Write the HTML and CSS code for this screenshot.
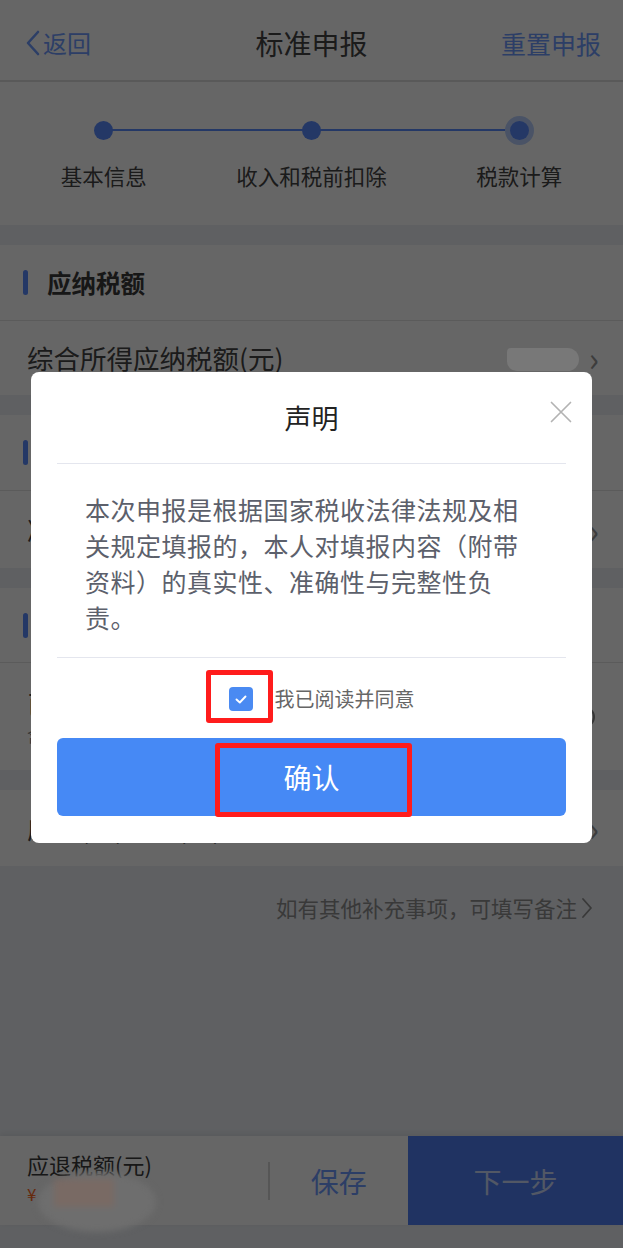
FILE: index.html
```html
<!DOCTYPE html>
<html lang="zh-CN">
<head>
<meta charset="utf-8">
<title>标准申报</title>
<link rel="stylesheet" href="styles.css">
</head>
<body>
<div class="page">
  <header class="nav">
    <a class="nav-back">
      <svg class="back-icon" viewBox="0 0 16 26" width="16" height="26"><path d="M13 2 L3 13 L13 24" fill="none" stroke="#6f9cff" stroke-width="2.6" stroke-linecap="round" stroke-linejoin="round"/></svg>
      <span>返回</span>
    </a>
    <h1 class="nav-title">标准申报</h1>
    <a class="nav-action">重置申报</a>
  </header>

  <section class="steps">
    <div class="steps-line"></div>
    <div class="step"><span class="dot"></span><span class="step-label">基本信息</span></div>
    <div class="step"><span class="dot"></span><span class="step-label">收入和税前扣除</span></div>
    <div class="step"><span class="dot dot-current"></span><span class="step-label">税款计算</span></div>
  </section>

  <div class="gap"></div>
  <section class="card">
    <div class="sec-head"><span class="bar"></span>应纳税额</div>
    <div class="row row-74"><span>综合所得应纳税额(元)</span><span class="chev">›</span></div>
  </section>

  <div class="gap"></div>
  <section class="card">
    <div class="sec-head"><span class="bar"></span>减免税额</div>
    <div class="row row-77"><span>减免税额(元)</span><span class="chev">›</span></div>
  </section>

  <div class="gap"></div>
  <section class="card">
    <div class="sec-head sec-head-75"><span class="bar"></span>已缴税额</div>
    <div class="row row-two">
      <div class="two-lines"><span class="big">已缴税额(元)</span><span class="small">含预扣预缴税额</span></div>
      <span class="info-ring"></span>
    </div>
  </section>

  <div class="gap"></div>
  <section class="card">
    <div class="row row-76"><span>应补(退)税额(元)</span><span class="chev">›</span></div>
  </section>

  <div class="remark">如有其他补充事项，可填写备注<svg class="remark-chev" viewBox="0 0 12 22" width="12" height="22"><path d="M2 2 L10 11 L2 20" fill="none" stroke="#8f8f8f" stroke-width="1.8" stroke-linecap="round" stroke-linejoin="round"/></svg></div>

  <div class="spacer"></div>

  <footer class="bottom-bar">
    <div class="refund">
      <span class="refund-label">应退税额(元)</span>
      <span class="refund-value">¥</span>
    </div>
    <span class="divider"></span>
    <button class="btn-save">保存</button>
    <button class="btn-next">下一步</button>
  </footer>
  <div class="safe-area"></div>
</div>

<div class="mask"></div>
<div class="redact redact-1"></div>
<div class="redact redact-2"><span class="redact-inner"></span></div>

<div class="modal">
  <div class="modal-head">
    <h2 class="modal-title">声明</h2>
    <svg class="modal-close" viewBox="0 0 22 22" width="22" height="22"><path d="M1.5 1.5 L20.5 20.5 M20.5 1.5 L1.5 20.5" stroke="#b3b3b3" stroke-width="1.7" stroke-linecap="round"/></svg>
  </div>
  <p class="modal-text">本次申报是根据国家税收法律法规及相关规定填报的，本人对填报内容（附带资料）的真实性、准确性与完整性负责。</p>
  <label class="agree">
    <span class="checkbox"><svg viewBox="0 0 24 24" width="24" height="24"><path d="M7.5 12.5 L10.8 15.5 L16.5 9.5" fill="none" stroke="#fff" stroke-width="1.9" stroke-linecap="round" stroke-linejoin="round"/></svg></span>
    <span class="agree-text">我已阅读并同意</span>
  </label>
  <button class="btn-confirm">确认</button>
  <span class="mark mark-check"></span>
  <span class="mark mark-confirm"></span>
</div>
</body>
</html>
```

FILE: styles.css
```css
* { box-sizing: border-box; margin: 0; padding: 0; }

body {
  width: 623px;
  height: 1248px;
  overflow: hidden;
  position: relative;
  background: #edf0f5;
  color: #444;
  font-family: "Noto Sans CJK SC", "Noto Sans", sans-serif;
}

.page {
  display: flex;
  flex-direction: column;
  height: 1248px;
}

/* nav */
.nav {
  height: 82px;
  flex: none;
  background: #fff;
  border-bottom: 2px solid #dedede;
  display: flex;
  align-items: center;
  justify-content: space-between;
  padding: 6px 22px 0 25px;
  position: relative;
}
.nav-back {
  display: flex;
  align-items: center;
  gap: 2px;
  color: #6f9cff;
  font-size: 24px;
  line-height: 30px;
}
.nav-title {
  position: absolute;
  left: 0;
  right: 0;
  top: 6px;
  bottom: 0;
  display: flex;
  align-items: center;
  justify-content: center;
  font-size: 28px;
  font-weight: 400;
  color: #444;
  pointer-events: none;
}
.nav-action {
  color: #6f9cff;
  font-size: 25px;
  line-height: 30px;
}

/* steps */
.steps {
  height: 143px;
  flex: none;
  background: #fff;
  display: grid;
  grid-template-columns: repeat(3, 1fr);
  position: relative;
}
.steps-line {
  position: absolute;
  left: 104px;
  right: 105px;
  top: 47px;
  height: 2px;
  background: #5b8cff;
}
.step {
  display: flex;
  flex-direction: column;
  align-items: center;
  padding-top: 39px;
  position: relative;
}
.dot {
  width: 19px;
  height: 19px;
  border-radius: 50%;
  background: #5b8cff;
}
.dot-current {
  box-shadow: 0 0 0 5px #b8d0ff;
}
.step-label {
  margin-top: 22px;
  font-size: 21.5px;
  line-height: 28px;
  color: #444;
}

/* sections */
.gap { height: 20px; flex: none; }
.card { background: #fff; flex: none; }
.sec-head {
  height: 76px;
  display: flex;
  align-items: center;
  gap: 19px;
  padding-left: 23px;
  border-bottom: 1px solid #e3e3e3;
  font-size: 24.5px;
  font-weight: 700;
  color: #3a3a3a;
}
.sec-head-75 { height: 75px; }
.bar {
  width: 5px;
  height: 25px;
  border-radius: 3px;
  background: #5b8cff;
}
.row {
  display: flex;
  align-items: center;
  justify-content: space-between;
  padding: 0 24px 0 27px;
  font-size: 26.5px;
  line-height: 30px;
  color: #444;
}
.row-74 { height: 74px; }
.row-77 { height: 77px; }
.row-76 { height: 76px; }
.row-two { height: 107px; }
.chev {
  font-size: 34px;
  color: #999;
  line-height: 30px;
}
.two-lines {
  display: flex;
  flex-direction: column;
  gap: 6px;
}
.two-lines .big { font-size: 26px; line-height: 30px; }
.two-lines .small { font-size: 17px; line-height: 20px; color: #888; }
.info-ring {
  width: 22px;
  height: 22px;
  border-radius: 50%;
  border: 2px solid #888;
  margin-right: 4px;
}

.remark {
  margin-top: 28px;
  align-self: flex-end;
  margin-right: 30px;
  display: flex;
  align-items: center;
  gap: 4px;
  font-size: 21.5px;
  line-height: 28px;
  color: #8f8f8f;
}

.spacer { flex: 1; }

/* bottom bar */
.bottom-bar {
  height: 89px;
  flex: none;
  display: flex;
  align-items: center;
  background: #fff;
  box-shadow: 0 -2px 6px rgba(0, 0, 0, 0.08);
}
.refund {
  width: 268px;
  height: 100%;
  padding: 13px 0 0 27px;
  display: flex;
  flex-direction: column;
}
.refund-label {
  font-size: 22px;
  line-height: 30px;
  color: #3a3a3a;
}
.refund-value {
  margin-top: 1px;
  font-size: 17px;
  line-height: 28px;
  color: #ff6a1f;
}
.divider {
  width: 1.5px;
  height: 38px;
  background: #d8d8d8;
}
.btn-save {
  flex: 1;
  height: 100%;
  border: 0;
  background: transparent;
  font-family: inherit;
  font-size: 28px;
  color: #6f9cff;
}
.btn-next {
  width: 215px;
  height: 100%;
  border: 0;
  background: #5280f5;
  font-family: inherit;
  font-size: 28px;
  color: rgba(255, 255, 255, 0.72);
}
.safe-area { height: 23px; flex: none; }

/* mask + redactions */
.mask {
  position: absolute;
  inset: 0;
  background: rgba(0, 0, 0, 0.6);
}
.redact {
  position: absolute;
}
.redact-1 {
  left: 507px;
  top: 348px;
  width: 72px;
  height: 23px;
  border-radius: 4px 12px 12px 10px;
  background: #787878;
  filter: blur(0.6px);
}
.redact-2 {
  left: 38px;
  top: 1172px;
  width: 118px;
  height: 60px;
  border-radius: 50%;
  background: #6e6e6e;
  filter: blur(3px);
}
.redact-inner {
  position: absolute;
  left: 16px;
  top: 7px;
  width: 60px;
  height: 28px;
  background: #796a64;
}

/* modal */
.modal {
  position: absolute;
  left: 31px;
  top: 372px;
  width: 561px;
  height: 471px;
  background: #fff;
  border-radius: 8px;
  padding: 0 26px 26px;
  display: flex;
  flex-direction: column;
}
.modal-head {
  height: 92px;
  flex: none;
  border-bottom: 1.5px solid #e4e6ee;
  display: flex;
  align-items: center;
  justify-content: center;
  position: relative;
}
.modal-title {
  font-size: 27px;
  font-weight: 400;
  color: #222;
  line-height: 34px;
}
.modal-close {
  position: absolute;
  right: -6px;
  top: 29px;
}
.modal-text {
  padding: 27px 34px 22px 28px;
  font-size: 25px;
  letter-spacing: 0.5px;
  line-height: 36px;
  color: #5c606b;
  border-bottom: 1.5px solid #e4e6ee;
}
.agree {
  display: flex;
  align-items: center;
  justify-content: center;
  gap: 22px;
  margin: 29px 0 0 20px;
  height: 24px;
}
.checkbox {
  width: 24px;
  height: 24px;
  border-radius: 4px;
  background: #4a8af2;
  display: flex;
}
.agree-text {
  font-size: 20px;
  line-height: 24px;
  color: #666;
}
.btn-confirm {
  margin-top: 27px;
  height: 78px;
  border: 0;
  border-radius: 6px;
  background: #4689f5;
  font-family: inherit;
  font-size: 28px;
  color: #fff;
}

/* annotation boxes */
.mark {
  position: absolute;
  border: 5px solid #ff1c1c;
  border-radius: 3px;
}
.mark-check {
  left: 175px;
  top: 298px;
  width: 67px;
  height: 53px;
}
.mark-confirm {
  left: 184px;
  top: 371px;
  width: 197px;
  height: 74px;
}
```
